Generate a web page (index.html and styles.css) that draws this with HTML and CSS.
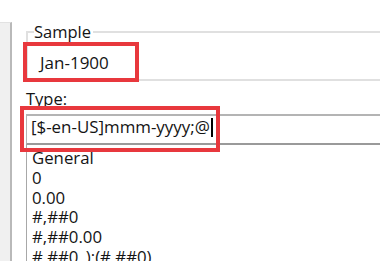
FILE: index.html
```html
<!DOCTYPE html>
<html>
<head>
<meta charset="utf-8">
<link rel="stylesheet" href="styles.css">
</head>
<body>
<div class="page">
  <div class="side"></div>
  <div class="main">
    <fieldset class="sample">
      <legend>Sample</legend>
      <div class="sample-value">Jan-1900</div>
    </fieldset>
    <div class="type-label">Type:</div>
    <div class="type-field"><span class="type-text">[$-en-US]mmm-yyyy;@</span><span class="caret"></span></div>
    <ul class="list">
      <li>General</li>
      <li>0</li>
      <li>0.00</li>
      <li>#,##0</li>
      <li>#,##0.00</li>
      <li>#,##0_);(#,##0)</li>
    </ul>
  </div>
  <div class="callout callout-sample"></div>
  <div class="callout callout-type"></div>
</div>
</body>
</html>
```

FILE: styles.css
```css
html, body {
  margin: 0;
  padding: 0;
  background: #ffffff;
}

.page {
  position: relative;
  display: flex;
  width: 380px;
  height: 261px;
  overflow: hidden;
  font-family: "Open Sans", "Noto Sans", sans-serif;
  color: #141414;
}

.side {
  flex: 0 0 10px;
  margin-top: 22px;
  background: #f0f0f0;
  border-top: 1px solid #e2e2e2;
  border-right: 2px solid #b9b9b9;
}

.main {
  flex: 1;
  min-width: 0;
  padding-left: 14px;
  display: flex;
  flex-direction: column;
}

.sample {
  margin: 22px 0 0 0;
  padding: 0;
  border: 2px solid #e0e0e0;
  border-right: 0;
  min-width: 0;
}

.sample legend {
  margin-left: 6px;
  padding: 0 2px 0 0;
  font-size: 16.5px;
  line-height: 20px;
}

.sample-value {
  margin-top: 9px;
  padding: 0 0 4px 12px;
  font-size: 17px;
  line-height: 24px;
}

.type-label {
  margin-top: 8px;
  font-size: 16.5px;
  line-height: 20px;
}

.type-field {
  margin-top: 5px;
  border-top: 2px solid #b4b4b4;
  border-bottom: 2px solid #9a9a9a;
  border-left: 1px solid #b4b4b4;
  padding: 1px 0 6px 4px;
  font-size: 16.9px;
  line-height: 20px;
  white-space: nowrap;
}

.caret {
  display: inline-block;
  width: 2px;
  height: 19px;
  margin-left: 1px;
  background: #000000;
  vertical-align: -4px;
}

.list {
  margin: 0;
  padding: 3px 0 0 5px;
  list-style: none;
  border-left: 1px solid #a8a8a8;
  flex: 1;
  font-size: 16.8px;
  line-height: 19.8px;
  white-space: nowrap;
}

.callout {
  position: absolute;
  border: 4px solid #e8383d;
  box-sizing: border-box;
}

.callout-sample {
  left: 23px;
  top: 42px;
  width: 116px;
  height: 40px;
}

.callout-type {
  left: 20px;
  top: 106px;
  width: 200px;
  height: 46px;
}
```
